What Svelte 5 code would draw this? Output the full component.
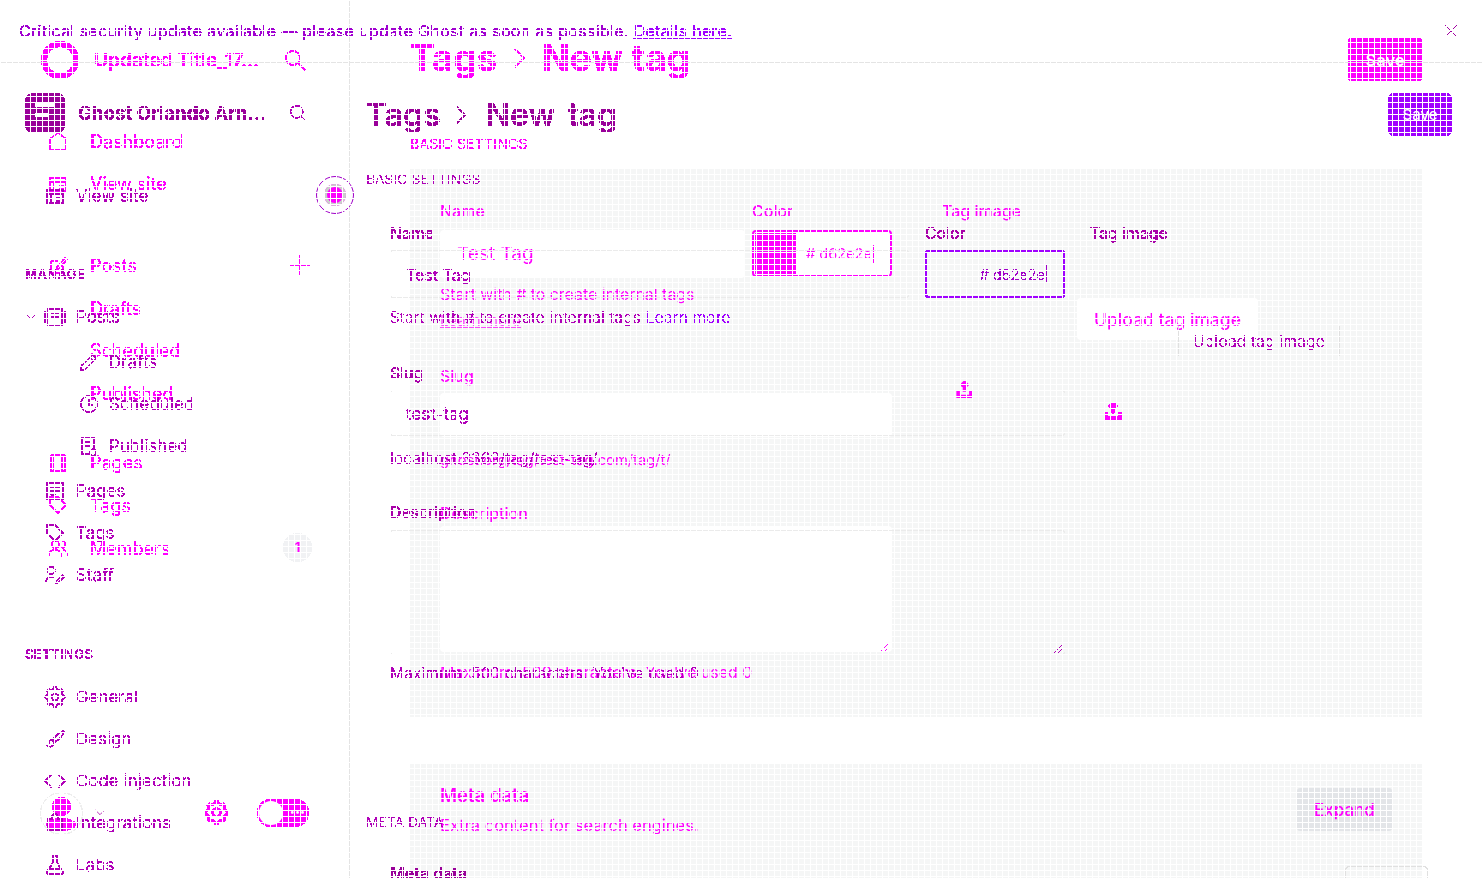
<script>
	const icons = {
		home: 'M3 10 12 3l9 7v12H3z',
		window: 'M3 5h18v15H3zM3 10h18M8 10v10M13 14h5M13 17h5',
		pencilSquare: 'M4 8h8M4 8v13h13v-8M11 14 20 4l2 2-9 10-3 1z',
		posts: 'M4 3h16v18H4zM1 6v12M23 6v12M8 8h8M8 12h8',
		pencil: 'M3 21l1-5L16 4l4 4L8 20zM13 7l4 4',
		clock: 'M12 3a9 9 0 1 0 0 18 9 9 0 0 0 0-18zM12 7v6h4',
		published: 'M4 3h13v12M4 3v18h8M7 8h7M7 12h7M20 19a3.500 3.500 0 1 1-7 0 3.500 3.500 0 0 1 7 0z',
		page: 'M6 3h12a2 2 0 0 1 2 2v14a2 2 0 0 1-2 2H6a2 2 0 0 1-2-2V5a2 2 0 0 1 2-2zM8 3v18M16 3v18',
		pages: 'M3 3h18v18H3zM7 8h10M7 12h10M7 16h6',
		tag: 'M3 3h9l9 9-9 9-9-9zM7.500 7.500h.5',
		members: 'M9 4a4 4 0 1 1 0 8 4 4 0 0 1 0-8zM2 21c0-5 3-7 7-7s7 2 7 7M16 4a4 4 0 0 1 0 8M18 14c3 1 4 3 4 7',
		staff: 'M8 3a4 4 0 1 1 0 8 4 4 0 0 1 0-8zM2 21c0-4 2-7 6-7 2 0 3 .5 4 1M13 21l1-3 6-6 2 2-6 6z',
		gear: 'M10.325 4.317c.426-1.756 2.924-1.756 3.35 0a1.724 1.724 0 002.573 1.066c1.543-.94 3.31.826 2.37 2.37a1.724 1.724 0 001.065 2.572c1.756.426 1.756 2.924 0 3.35a1.724 1.724 0 00-1.066 2.573c.94 1.543-.826 3.31-2.37 2.37a1.724 1.724 0 00-2.572 1.065c-.426 1.756-2.924 1.756-3.35 0a1.724 1.724 0 00-2.573-1.066c-1.543.94-3.31-.826-2.37-2.37a1.724 1.724 0 00-1.065-2.572c-1.756-.426-1.756-2.924 0-3.35a1.724 1.724 0 001.066-2.573c-.94-1.543.826-3.31 2.37-2.37.996.608 2.296.07 2.572-1.065zM15 12a3 3 0 11-6 0 3 3 0 016 0z',
		brush: 'M21 3c-3 1-9 6-11 9l3 3c3-2 8-8 9-11zM9 13c-3 0-4 2-4 4 0 1-1 2-2 2 2 2 7 2 8-2 0-1 0-2-2-3z',
		code: 'M8 5l-7 7 7 7M16 5l7 7-7 7',
		puzzle: 'M4 8h5V5a3 3 0 0 1 6 0v3h5v12H4z',
		flask: 'M9 2h6M10 2v7L3 20a1.500 1.500 0 0 0 1 2h16a1.500 1.500 0 0 0 1-2L14 9V2M6 16h12',
		search: 'M10 3a7 7 0 1 1 0 14 7 7 0 0 1 0-14zM15 15l7 7',
		plus: 'M12 2v20M2 12h20',
		close: 'M4 4l16 16M20 4L4 20',
		chev: 'M5 9l7 7 7-7',
		crumb: 'M8 3l9 9-9 9'
	};

	const navTop = [
		{ icon: 'home', label: 'Dashboard' },
		{ icon: 'window', label: 'View site' }
	];
	const navManage = [
		{ icon: 'pencilSquare', label: 'Posts', plus: true },
		{ icon: '', label: 'Drafts' },
		{ icon: '', label: 'Scheduled' },
		{ icon: '', label: 'Published', gap: true },
		{ icon: 'page', label: 'Pages' },
		{ icon: 'tag', label: 'Tags' },
		{ icon: 'members', label: 'Members', badge: 1 }
	];

	const subNav = [
		{ icon: 'pencil', label: 'Drafts' },
		{ icon: 'clock', label: 'Scheduled' },
		{ icon: 'published', label: 'Published' }
	];
	const mainNav = [
		{ icon: 'pages', label: 'Pages' },
		{ icon: 'tag', label: 'Tags' },
		{ icon: 'staff', label: 'Staff' }
	];
	const settingsNav = [
		{ icon: 'gear', label: 'General' },
		{ icon: 'brush', label: 'Design' },
		{ icon: 'code', label: 'Code injection' },
		{ icon: 'puzzle', label: 'Integrations' },
		{ icon: 'flask', label: 'Labs' }
	];
</script>

{#snippet icon(name, size = 22, width = 1.5)}
	<svg class="ic" viewBox={name === 'gear' ? '2 2 20 20' : '0 0 24 24'} width={size} height={size} fill="none" stroke="currentColor" stroke-width={width}><path d={icons[name]} /></svg>
{/snippet}

{#snippet upload(size)}
	<svg viewBox="0 0 24 24" width={size} height={size} fill="none" stroke="currentColor" stroke-width="5"><path d="M12 15V3M7 7l5-5 5 5M3 14v8h18v-8" /></svg>
{/snippet}

<svg class="defs" width="0" height="0">
	<filter id="hard" color-interpolation-filters="sRGB">
		<feComponentTransfer><feFuncA type="discrete" tableValues="0 1 1 1" /></feComponentTransfer>
	</filter>
</svg>

<div class="page">
	<!-- magenta pass -->
	<div class="layer pass-a">
		<aside class="side-a">
			<div class="brand-a">
				<span class="logo-ring"></span>
				<strong>Updated Title_17...</strong>
				<span class="search-a">{@render icon('search', 24, 1.6)}</span>
			</div>
			<nav class="nav-a top-a">
				{#each navTop as item}
					<div class="item-a">{@render icon(item.icon)}<span>{item.label}</span></div>
				{/each}
			</nav>
			<nav class="nav-a manage-a">
				{#each navManage as item}
					<div class="item-a" class:gap={item.gap}>
						{#if item.icon}{@render icon(item.icon)}{:else}<span class="ic-blank"></span>{/if}
						<span>{item.label}</span>
						{#if item.plus}<span class="plus">{@render icon('plus', 24, 2)}</span>{/if}
						{#if item.badge}<span class="badge">{item.badge}</span>{/if}
					</div>
				{/each}
			</nav>
			<div class="foot-a">
				<div class="avatar">
					<span class="head"></span>
					<span class="body"></span>
				</div>
				<span class="foot-gear">{@render icon('gear', 25, 2)}</span>
				<div class="toggle"><span class="knob"></span><span class="moon">•••</span></div>
			</div>
		</aside>

		<main class="main-a">
			<header class="head-a">
				<h1>Tags <span class="crumb">{@render icon('crumb', 24, 1.6)}</span> New tag</h1>
				<button class="save-a">Save</button>
			</header>
			<h2 class="section-a">BASIC SETTINGS</h2>
			<section class="panel basic-a">
				<div class="col-left">
					<div class="row-a">
						<div class="name-a">
							<label>Name</label>
							<div class="field-a name-input">Test Tag</div>
							<p class="hint-a hint-name">Start with # to create internal tags</p>
							<p class="hint-a learn">Learn more</p>
						</div>
						<div class="color-a">
							<label>Color</label>
							<div class="color-input-a"><span class="swatch"></span><span class="hex">#&nbsp;d62e2e</span><span class="caret"></span></div>
						</div>
					</div>
					<label class="slug-label">Slug</label>
					<div class="field-a slug-input"></div>
					<p class="hint-a url-a">ghost.org/tag/test-tag.com/tag/t/</p>
					<label class="desc-label">Description</label>
					<div class="area-a">
						<svg class="grip" width="10" height="10" viewBox="0 0 10 10" stroke="currentColor" fill="none"><path d="M1 9 9 1M5 9 9 5" /></svg>
					</div>
					<p class="hint-a max-a">Maximum: 500 characters. You've used 0</p>
				</div>
				<div class="col-right">
					<label>Tag image</label>
					<div class="upload-a">Upload tag image</div>
					<span class="up-icon-a">{@render upload(17)}</span>
				</div>
			</section>
			<section class="panel meta-a">
				<div>
					<h3>Meta data</h3>
					<p>Extra content for search engines.</p>
				</div>
				<button class="expand">Expand</button>
			</section>
		</main>
	</div>

	<!-- purple pass -->
	<div class="layer pass-b">
		<div class="banner">
			<p>Critical security update available — please update Ghost as soon as possible. <a href="#details">Details here.</a></p>
			<span class="close">{@render icon('close', 18, 1.3)}</span>
		</div>
		<div class="body-b">
			<aside class="side-b">
				<div class="brand-b">
					<span class="logo-b"><i></i></span>
					<strong>Ghost Orlando Arn...</strong>
					<span class="search-b">{@render icon('search', 21, 1.2)}</span>
				</div>
				<div class="item-b site">{@render icon('window')}<span>View site</span></div>
				<div class="group-b manage-b">MANAGE</div>
				<div class="item-b"><span class="chev">{@render icon('chev', 14, 1.2)}</span>{@render icon('posts')}<span>Posts</span></div>
				<div class="subs">
					{#each subNav as item}
						<div class="item-b sub">{@render icon(item.icon)}<span>{item.label}</span></div>
					{/each}
				</div>
				<div class="mains">
					{#each mainNav as item}
						<div class="item-b">{@render icon(item.icon)}<span>{item.label}</span></div>
					{/each}
				</div>
				<div class="group-b settings-b">SETTINGS</div>
				{#each settingsNav as item}
					<div class="item-b set">{@render icon(item.icon)}<span>{item.label}</span></div>
				{/each}
			</aside>

			<main class="main-b">
				<header class="head-b">
					<h1>Tags <span class="crumb">{@render icon('crumb', 24, 1.3)}</span> New tag</h1>
					<button class="save-b">Save</button>
				</header>
				<h2 class="section-b">BASIC SETTINGS</h2>
				<section class="basic-b">
					<div class="col-b">
						<div class="row-b">
							<div class="name-b">
								<label>Name</label>
								<div class="field-b tall">Test Tag</div>
							</div>
							<div class="color-b">
								<label>Color</label>
								<div class="color-input-b"><span class="hex">#&nbsp;d62e2e</span><span class="caret"></span></div>
							</div>
						</div>
						<p class="hint-b">Start with # to create internal tags <a href="#learn">Learn more</a></p>
						<label class="slug-b">Slug</label>
						<div class="field-b slug-field">test-tag</div>
						<p class="hint-b url-b">localhost:3369/tag/test-tag/</p>
						<label class="desc-b">Description</label>
						<div class="area-b">
							<svg class="grip" width="10" height="10" viewBox="0 0 10 10" stroke="currentColor" fill="none"><path d="M1 9 9 1M5 9 9 5" /></svg>
						</div>
						<p class="hint-b max-b">Maximum: 500 characters. You've used 0</p>
					</div>
					<div class="image-b">
						<label>Tag image</label>
						<div class="upload-b">Upload tag image</div>
						<span class="up-icon-b">{@render upload(18)}</span>
					</div>
				</section>
				<h2 class="section-b meta-title">META DATA</h2>
				<div class="meta-row">
					<label>Meta data</label>
					<span class="meta-btn"></span>
				</div>
			</main>
		</div>
	</div>

	<!-- floating bits that sit over both passes -->
	<div class="globe"><span class="globe-in"></span></div>
	<div class="foot-chev">{@render icon('chev', 16, 1.3)}</div>
	<div class="grid"></div>
</div>

<style>
	:global(body) { background: #fff; }
	.defs { position: absolute; }
	.page { position: relative; width: 1483px; height: 878px; overflow: hidden; background: #fff; font-family: Inter, "Liberation Sans", sans-serif; }
	.layer { position: absolute; inset: 0; display: flex; filter: url(#hard); }
	.grid { position: absolute; inset: 0; pointer-events: none; background-image: linear-gradient(#fff 1px, transparent 1px), linear-gradient(90deg, #fff 1px, transparent 1px); background-size: 6px 6px; }
	h1, h2, h3, p { margin: 0; font-weight: inherit; }
	label { display: block; }
	button { border: none; padding: 0; font: inherit; }
	a { color: inherit; }
	.ic { display: block; flex: none; }

	/* magenta pass */
	.pass-a { color: #f0f; }
	.side-a { width: 349px; height: 878px; flex: none; border-right: 1px solid #e4e4e4; }
	.brand-a { display: flex; align-items: center; height: 38px; margin: 41px 0 0 41px; }
	.logo-ring { width: 26px; height: 26px; border: 6px solid #f0f; border-radius: 50%; flex: none; }
	.brand-a strong { margin-left: 15px; font-size: 19px; font-weight: 600; white-space: nowrap; }
	.search-a { margin-left: 24px; }
	.nav-a { margin: 0 0 0 47px; }
	.top-a { margin-top: 41px; }
	.item-a { position: relative; display: flex; align-items: center; height: 42.600px; gap: 21px; font-size: 18px; width: 265px; }
	.ic-blank { width: 22px; }
	.item-a.gap { margin-bottom: 27px; }
	.manage-a { margin-top: 39px; }
	.plus { position: absolute; right: 0; top: 9px; }
	.badge { position: absolute; right: 0; top: 6px; width: 29px; height: 29px; border-radius: 50%; background: #f1f2f4; color: #f0f; font-size: 13px; font-weight: 700; display: flex; align-items: center; justify-content: center; }
	.foot-a { position: absolute; left: 0; top: 790px; width: 349px; height: 48px; }
	.avatar { position: absolute; left: 40px; top: 2px; width: 41px; height: 41px; border: 1px solid #eee; border-radius: 50%; }
	.head { position: absolute; left: 11px; top: 4px; width: 19px; height: 19px; border-radius: 50%; background: #f0f; }
	.body { position: absolute; left: 5px; top: 25px; width: 30px; height: 13px; border-radius: 50%; background: #f0f; }
	.foot-gear { position: absolute; left: 204px; top: 10px; }
	.toggle { position: absolute; left: 257px; top: 9px; width: 52px; height: 28px; border-radius: 14px; background: #f0f; }
	.knob { position: absolute; left: 2px; top: 2px; width: 24px; height: 24px; border-radius: 50%; background: #fff; }
	.moon { position: absolute; right: 4px; top: 7px; color: #fff; font-size: 9px; }

	.main-a { flex: 1; padding: 38px 61px 0 60px; min-width: 0; }
	.head-a { display: flex; justify-content: space-between; align-items: center; height: 43px; }
	.head-a h1 { font-size: 37px; font-weight: 700; display: flex; align-items: center; line-height: 40px; margin-top: -3px; }
	.crumb { margin: 0 11px 0 9px; }
	.save-a { width: 74px; height: 43px; background: #f0f; color: #fff; font-size: 16.500px; font-weight: 600; border-radius: 3px; }
	.section-a { margin-top: 55px; font-size: 14px; line-height: 16px; letter-spacing: .2px; }
	.panel { background: #f5f6f6; }
	.basic-a { display: flex; height: 548px; margin-top: 17px; padding: 34px 30px 0; box-sizing: border-box; }
	.basic-a label { line-height: 17px; font-weight: 500; font-size: 16px; }
	.col-left { width: 452px; flex: none; }
	.row-a { display: flex; gap: 7px; }
	.name-a { width: 305px; }
	.field-a { background: #fff; border-radius: 4px; box-sizing: border-box; padding-left: 17px; font-size: 19px; display: flex; align-items: center; }
	.name-input { height: 48px; margin-top: 10px; padding-bottom: 2px; }
	.slug-input { height: 44px; margin-top: 8px; }
	.hint-a { font-size: 15.900px; line-height: 18px; white-space: nowrap; }
	.hint-name { margin-top: 8px; }
	.learn { margin-top: 8px; font-size: 15px; text-decoration: underline; opacity: .7; }
	.color-a { width: 140px; }
	.color-input-a { display: flex; align-items: center; position: relative; height: 47px; margin-top: 10px; border: 2px solid #f0f; border-radius: 4px; box-sizing: border-box; background: #fff; font-size: 14.500px; }
	.swatch { width: 41px; height: 41px; background: #f0f; margin: 0 10px 0 1px; flex: none; }
	.hex { white-space: nowrap; }
	.caret { width: 1px; height: 18px; background: currentColor; margin-left: 1px; }
	.slug-label { margin-top: 38px; }
	.url-a { margin-top: 14px; font-size: 14.700px; }
	.desc-label { margin-top: 36px; }
	.area-a { position: relative; height: 126px; margin-top: 4px; background: #fff; border-radius: 4px; }
	.grip { position: absolute; right: 2px; bottom: 0; }
	.max-a { margin-top: 12px; }
	.col-right { flex: 1; margin-left: 50px; }
	.upload-a { margin: 78px 0 0 135px; width: 181px; height: 42px; border-radius: 4px; background: #fff; display: flex; align-items: center; justify-content: center; font-size: 17.500px; font-weight: 500; white-space: nowrap; }
	.up-icon-a { display: block; margin: 41px 0 0 14px; width: 17px; }
	.meta-a { display: flex; justify-content: space-between; align-items: flex-start; height: 115px; margin-top: 47px; padding: 22px 30px 0; }
	.meta-a h3 { font-size: 18.500px; font-weight: 600; line-height: 18px; }
	.meta-a p { font-size: 16.500px; line-height: 18px; margin-top: 12px; }
	.expand { width: 95px; height: 43px; margin-top: 2px; background: #e3e5e8; color: #f0f; font-size: 17px; font-weight: 500; border-radius: 3px; }

	/* purple pass */
	.pass-b { flex-direction: column; color: #b000b8; font-weight: 300; }
	.banner { flex: none; height: 62px; border-bottom: 1px solid #e4e4e4; display: flex; align-items: center; justify-content: space-between; padding: 0 23px 0 19px; color: #a000d0; font-size: 16px; font-weight: 400; letter-spacing: .32px; margin-bottom: -1px; }
	.close { color: #a000a0; }
	.banner a { color: #a000ff; }
	.body-b { display: flex; flex: 1; min-height: 0; }
	.side-b { width: 350px; flex: none; padding-left: 25px; box-sizing: border-box; }
	.brand-b { display: flex; align-items: center; height: 40px; margin-top: 31px; }
	.logo-b { position: relative; width: 40px; height: 40px; border-radius: 8px; background: #909; flex: none; }
	.logo-b i { position: absolute; left: 10px; top: 10px; width: 20px; height: 18px; background: linear-gradient(#fff, #fff) left top / 20px 4px no-repeat, linear-gradient(#fff, #fff) left 10px / 14px 4px no-repeat; }
	.brand-b strong { margin-left: 13px; color: #909; font-size: 18.700px; font-weight: 700; white-space: nowrap; }
	.search-b { margin-left: 22px; }
	.item-b { position: relative; display: flex; align-items: center; height: 42px; gap: 10px; margin-left: 19px; font-size: 16.600px; font-weight: 400; letter-spacing: .2px; }
	.site { margin-top: 42px; }
	.group-b { font-size: 13px; font-weight: 600; line-height: 14px; letter-spacing: .4px; }
	.manage-b { margin: 50px 0 15px; }
	.chev { position: absolute; left: -20px; top: 14px; }
	.subs { margin-top: 3px; }
	.sub { margin-left: 53px; gap: 9px; }
	.mains { margin-top: 3px; }
	.settings-b { margin: 51px 0 15px; }

	.main-b { flex: 1; padding: 31px 31px 0 16px; min-width: 0; }
	.head-b { display: flex; justify-content: space-between; align-items: center; height: 43px; }
	.head-b h1 { font-size: 32px; font-weight: 600; color: #909; display: flex; align-items: center; word-spacing: 4px; }
	.head-b .crumb { margin: 0 14px 0 7px; }
	.save-b { width: 64px; height: 43px; background: #a000ff; color: #fff; font-size: 15px; font-weight: 500; border-radius: 6px; }
	.section-b { margin-top: 35px; font-size: 13.600px; line-height: 16px; letter-spacing: .3px; }
	.basic-b { display: flex; padding: 38px 0 0 24px; }
	.basic-b label { font-weight: 500; line-height: 17px; font-size: 15.700px; color: #a800a8; }
	.col-b { width: 675px; flex: none; }
	.row-b { display: flex; gap: 16px; }
	.name-b { width: 519px; }
	.field-b { box-sizing: border-box; height: 46px; margin-top: 8px; border-top: 1px solid #ebebeb; border-bottom: 1px solid #ebebeb; border-radius: 4px; padding: 1px 0 0 16px; font-size: 16px; font-weight: 400; display: flex; align-items: center; }
	.field-b.tall { height: 48px; }
	.slug-field { font-size: 17px; }
	.color-b { width: 140px; }
	.color-input-b { height: 48px; margin-top: 8px; border: 2px solid #a000ff; border-radius: 4px; box-sizing: border-box; display: flex; align-items: center; justify-content: flex-end; padding-right: 16px; color: #a000c8; font-size: 14.500px; }
	.hint-b { font-size: 15.400px; line-height: 18px; margin-top: 11px; letter-spacing: .3px; white-space: nowrap; }
	.hint-b a { color: #a000ff; text-decoration: none; }
	.slug-b { margin-top: 38px; }
	.url-b { margin-top: 14px; }
	.desc-b { margin-top: 36px; }
	.area-b { position: relative; box-sizing: border-box; height: 125px; margin-top: 9px; border-top: 1px solid #ebebeb; border-bottom: 1px solid #ebebeb; border-radius: 4px; }
	.max-b { margin-top: 10px; }
	.image-b { flex: 1; margin-left: 25px; }
	.upload-b { margin: 84px 0 0 88px; width: 162px; height: 30px; box-sizing: border-box; border-left: 1px solid #e0e0e0; border-right: 1px solid #e0e0e0; display: flex; align-items: center; justify-content: center; font-size: 15.800px; letter-spacing: .2px; white-space: nowrap; }
	.up-icon-b { display: block; margin: 46px 0 0 14px; width: 18px; color: #f0f; }
	.meta-title { margin-top: 131px; }
	.meta-row { display: flex; justify-content: space-between; align-items: flex-start; margin: 34px 0 0 24px; }
	.meta-row label { font-size: 16px; font-weight: 600; color: #909; line-height: 18px; }
	.meta-btn { width: 83px; height: 40px; margin: 2px 24px 0 0; box-sizing: border-box; border: 1px solid #e0e0e0; border-radius: 4px; }

	/* floating */
	.globe { position: absolute; left: 316px; top: 176px; width: 36px; height: 36px; border: 1px solid #a000c8; border-radius: 50%; display: flex; align-items: center; justify-content: center; background: #fff; }
	.globe-in { width: 22px; height: 22px; border-radius: 50%; background: #f0f; box-shadow: inset 0 0 0 3px #ccc; }
	.foot-chev { position: absolute; left: 92px; top: 804px; color: #b010b0; }
</style>
